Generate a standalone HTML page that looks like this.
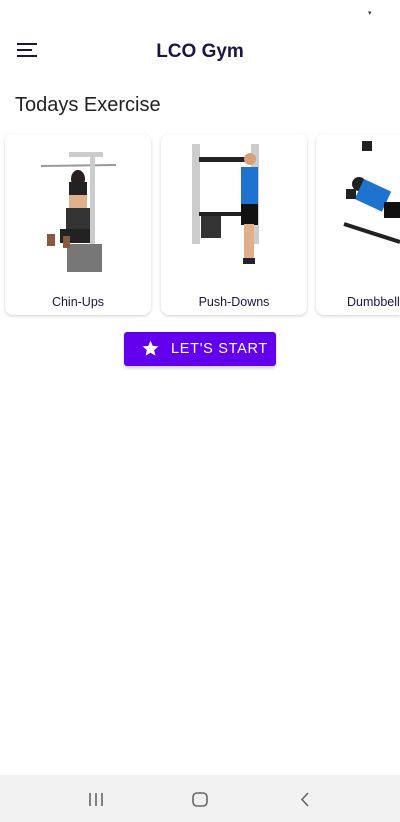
<!DOCTYPE html>
<html><head><meta charset="utf-8"><style>
*{margin:0;padding:0;box-sizing:border-box}
html,body{overflow:hidden}
body{width:400px;height:822px;background:#fff;position:relative;font-family:"Liberation Sans",Roboto,sans-serif}
.title{position:absolute;top:41px;left:0;width:400px;text-align:center;font-size:19px;font-weight:bold;color:#1a1646}
.h{position:absolute;top:94px;left:15px;font-size:20px;color:#222}
.card{position:absolute;top:134px;width:146px;height:181px;border-radius:8px;background:#fff;box-shadow:0 1px 3px rgba(0,0,0,.18);overflow:hidden}
.card .l{position:absolute;top:161px;width:100%;text-align:center;font-size:12.5px;color:#1a1646;white-space:nowrap}
.card svg{position:absolute;left:0;top:0}
.btn{position:absolute;left:124px;top:332px;width:152px;height:34px;background:#6200ee;border-radius:3px;color:#fff;font-size:14.5px;letter-spacing:.7px;box-shadow:0 2px 3px rgba(0,0,0,.2)}
.btn span{position:absolute;left:47px;top:9px}
.nav{position:absolute;top:775px;left:0;width:400px;height:47px;background:#f2f2f2}
</style></head><body>
<div style="position:absolute;left:368px;top:9px;font-size:7px;color:#333">▾</div>
<svg style="position:absolute;left:16px;top:42px" width="22" height="16"><g stroke="#1a1646" stroke-width="2"><line x1="1" y1="2" x2="21" y2="2"/><line x1="1" y1="8" x2="16" y2="8"/><line x1="1" y1="14" x2="21" y2="14"/></g></svg>
<div class="title">LCO Gym</div>
<div class="h">Todays Exercise</div>

<div class="card" style="left:5px">
<svg width="146" height="181"><line x1="36" y1="32" x2="111" y2="31" stroke="#999" stroke-width="2"/><rect x="64" y="18" width="34" height="5" fill="#ccc"/><rect x="85" y="20" width="5" height="95" fill="#ccc"/><rect x="62" y="110" width="35" height="28" fill="#777"/><ellipse cx="73" cy="45" rx="7" ry="9" fill="#2b2020"/><rect x="64" y="48" width="18" height="28" fill="#e0b08a"/><rect x="64" y="48" width="18" height="13" fill="#222"/><rect x="61" y="74" width="24" height="30" fill="#333"/><rect x="55" y="95" width="30" height="14" fill="#222"/><rect x="42" y="100" width="8" height="12" fill="#8a5a40"/><rect x="58" y="102" width="7" height="12" fill="#8a5a40"/></svg>
<div class="l">Chin-Ups</div></div>

<div class="card" style="left:161px">
<svg width="146" height="181"><rect x="31" y="10" width="8" height="100" fill="#ccc"/><rect x="90" y="10" width="8" height="100" fill="#ccc"/><rect x="38" y="23" width="52" height="5" fill="#222"/><rect x="38" y="78" width="52" height="4" fill="#222"/><rect x="40" y="82" width="20" height="22" fill="#333"/><circle cx="89" cy="25" r="6" fill="#d5a07a"/><rect x="80" y="33" width="17" height="38" fill="#1e73d0"/><rect x="80" y="70" width="17" height="21" fill="#111"/><rect x="83" y="90" width="10" height="35" fill="#e0b08a"/><rect x="82" y="124" width="12" height="6" fill="#223"/></svg>
<div class="l">Push-Downs</div></div>

<div class="card" style="left:316px;width:84px;border-radius:8px 0 0 8px">
<svg width="84" height="181"><circle cx="43" cy="50" r="7" fill="#222"/><rect x="48" y="45" width="30" height="22" transform="rotate(25 48 45)" fill="#1e73d0"/><rect x="46" y="7" width="10" height="10" fill="#222"/><rect x="30" y="55" width="10" height="10" fill="#222"/><line x1="28" y1="90" x2="84" y2="108" stroke="#222" stroke-width="4"/><rect x="68" y="68" width="16" height="16" fill="#111"/></svg>
<div class="l" style="left:31px;width:auto;text-align:left">Dumbbell</div></div>

<div class="btn"><svg style="position:absolute;left:17px;top:7px" width="19" height="19" viewBox="0 0 24 24"><path fill="#fff" d="M12 17.3l6.2 3.7-1.6-7 5.4-4.7-7.2-.6L12 2 9.2 8.7 2 9.3l5.4 4.7-1.6 7z"/></svg><span>LET'S START</span></div>

<div class="nav"><svg width="400" height="47"><g stroke="#666" stroke-width="1.6" fill="none"><line x1="90" y1="18" x2="90" y2="31"/><line x1="96" y1="18" x2="96" y2="31"/><line x1="102" y1="18" x2="102" y2="31"/><rect x="193" y="18" width="14" height="13" rx="4"/><polyline points="308,18 302,24.5 308,31"/></g></svg></div>
</body></html>
